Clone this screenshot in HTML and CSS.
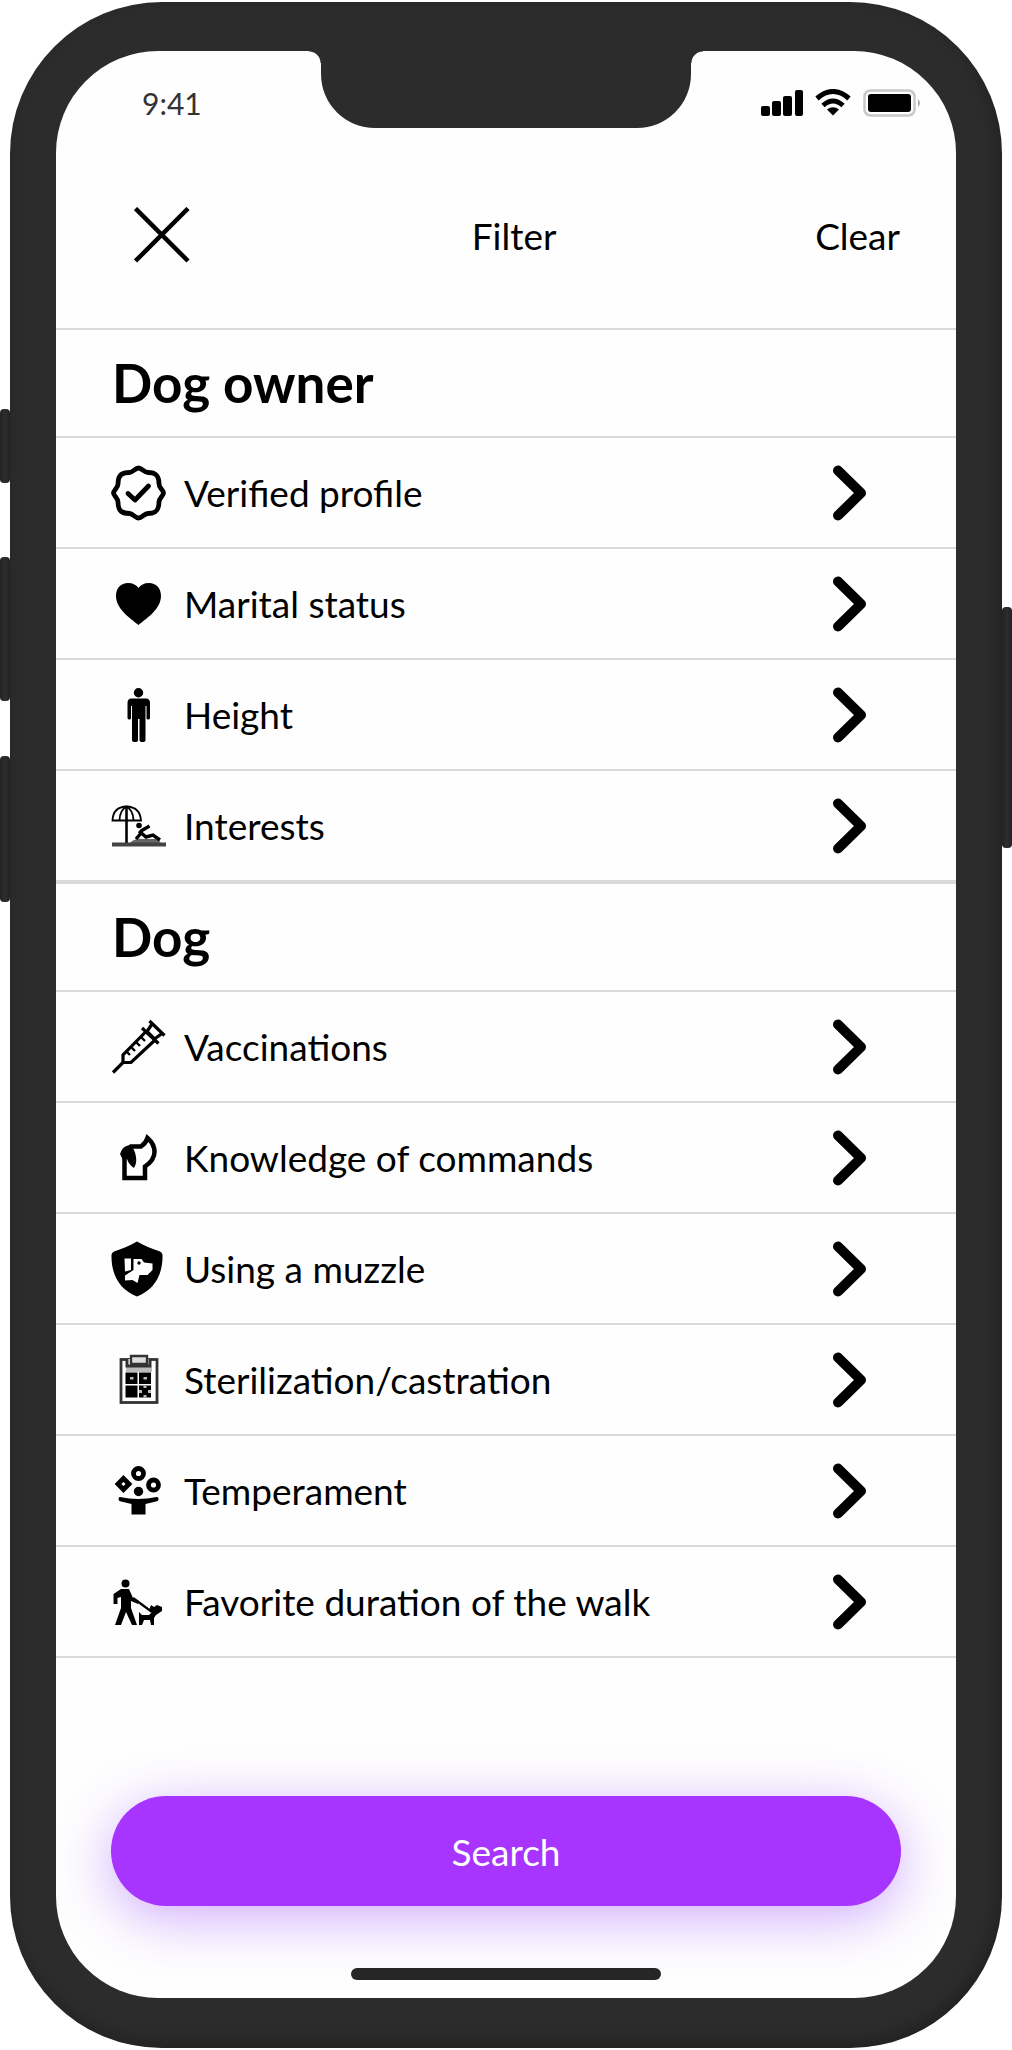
FILE: index.html
```
<!DOCTYPE html>
<html lang="en">
<head>
  <meta charset="UTF-8" />
  <meta name="viewport" content="width=device-width, initial-scale=1.0"/>
  <title>Filter</title>
  <link rel="stylesheet" href="styles.css">
</head>
<body>
<svg class="sprite" aria-hidden="true">
  <symbol id="chevron" viewBox="0 0 34 56">
    <path d="M5 5.500L28 28L5 50.500" fill="none" stroke="#000" stroke-width="10" stroke-linecap="round" stroke-linejoin="round"/>
  </symbol>
</svg>

<div class="phone">
  <span class="side-key mute"></span>
  <span class="side-key volume-up"></span>
  <span class="side-key volume-down"></span>
  <span class="side-key power"></span>

  <div class="screen">
    <div class="notch"></div>

    <div class="status-bar">
      <span class="time">9:41</span>
      <div class="status-icons">
        <svg width="44" height="28" viewBox="0 0 44 28">
          <rect x="0" y="17" width="9" height="10" rx="2"/>
          <rect x="11" y="12" width="9" height="15" rx="2"/>
          <rect x="22" y="7" width="9" height="20" rx="2"/>
          <rect x="34" y="1" width="8" height="26" rx="2"/>
        </svg>
        <svg width="38" height="28" viewBox="0 0 38 28">
          <path d="M2 9.500Q18 -4.500 34 9.500M8 16.500Q18 7.500 28 16.500" fill="none" stroke="#000" stroke-width="5"/>
          <path d="M12 20.500Q18 16 24 20.500L18 26.500Z"/>
        </svg>
        <svg width="59" height="28" viewBox="0 0 59 28">
          <rect x="1.500" y="1.500" width="50" height="25" rx="6" fill="none" stroke="#c8c8c8" stroke-width="2.500"/>
          <rect x="5" y="5" width="43" height="18" rx="3"/>
          <path d="M55 10q4 4 0 8z" fill="#aaa"/>
        </svg>
      </div>
    </div>

    <header class="header">
      <button class="close" type="button" aria-label="Close">
        <svg width="56" height="56" viewBox="0 0 56 56"><path d="M1.500 1.500L54 54M54 1.500L1.500 54" stroke="#000" stroke-width="4.500"/></svg>
      </button>
      <h1 class="title">Filter</h1>
      <button class="clear" type="button">Clear</button>
    </header>

    <section class="group">
      <h2>Dog owner</h2>
      <ul>
        <li><a class="row" href="#">
          <svg class="icon" viewBox="0 0 56 56">
            <g fill="none" stroke="#000" stroke-width="4.800" stroke-linejoin="round" stroke-linecap="round">
              <path d="M27.500 3C31 3 33 7.500 37 7.500C43 7.500 48 9 48 19C48 23 52.500 25 52.500 28C52.500 31 48 33 48 37C48 47 43 48.500 37 48.500C33 48.500 31 53 27.500 53C24 53 22 48.500 18.500 48.500C12 48.500 7 47 7 37C7 33 2.500 31 2.500 28C2.500 25 7 23 7 19C7 9 12 7.500 18.500 7.500C22 7.500 24 3 27.500 3Z"/>
              <path d="M17 28.500L24 35L37.500 21"/>
            </g>
          </svg>
          <span class="name">Verified profile</span>
          <svg class="chevron"><use href="#chevron"/></svg>
        </a></li>
        <li><a class="row" href="#">
          <svg class="icon" viewBox="0 0 56 56">
            <path d="M27.500 49C22 44 5 34 5 20C5 12 10 7 17 7C22 7 25.500 9 27.500 12C29.500 9 33 7 38 7C45 7 50 12 50 20C50 34 33 44 27.500 49Z"/>
          </svg>
          <span class="name">Marital status</span>
          <svg class="chevron"><use href="#chevron"/></svg>
        </a></li>
        <li><a class="row" href="#">
          <svg class="icon" viewBox="0 0 56 56">
            <circle cx="27.500" cy="5.800" r="4.700"/>
            <path d="M20.500 11.500H35Q39 11.500 39 16V31Q39 32.500 37 32.500Q35.500 32.500 35.500 31V19H34.500V53Q34.500 55 31.500 55Q28.500 55 28.500 53V32H27V53Q27 55 24 55Q21 55 21 53V19H20V31Q20 32.500 18.500 32.500Q16.500 32.500 16.500 31V16Q16.500 11.500 20.500 11.500Z"/>
          </svg>
          <span class="name">Height</span>
          <svg class="chevron"><use href="#chevron"/></svg>
        </a></li>
        <li><a class="row" href="#">
          <svg class="icon" viewBox="0 0 56 56">
            <g fill="none" stroke="#000" stroke-width="1.800">
              <path d="M1.500 22.500Q2 9 15.500 8.500Q29 9 30 22.500Z"/>
              <path d="M8.500 22Q9 12 15.500 8.500Q22 12 22.500 22"/>
              <path d="M15.500 8V45" stroke-width="2.600"/>
            </g>
            <path d="M19 45Q24 40 32 41L44 41Q47 41 50 45Z" fill="#666"/>
            <path d="M1 44.500H55V48.500H1Z" fill="#444"/>
            <circle cx="28" cy="27.500" r="2.800"/>
            <path d="M28 33L35 39L42 37L49 42M25 41L31 34M30 33L38.500 28" fill="none" stroke="#000" stroke-width="3.400"/>
          </svg>
          <span class="name">Interests</span>
          <svg class="chevron"><use href="#chevron"/></svg>
        </a></li>
      </ul>
    </section>

    <section class="group">
      <h2>Dog</h2>
      <ul>
        <li><a class="row" href="#">
          <svg class="icon" viewBox="0 0 56 56">
            <g fill="none" stroke="#000" stroke-width="3.200">
              <path d="M2 53.500L12 43.500"/>
              <path d="M34.500 13L12 36V43.500H20L43.500 21.500"/>
              <path d="M31 9L47.500 24.500M38.500 2L53.500 16.500M41 5L36 12.500L43.500 20L51 14.500"/>
              <path d="M30 18L34 22M25 23L29 27M20 28L24 32M16 33L19 36" stroke-width="2.400"/>
            </g>
          </svg>
          <span class="name">Vaccinations</span>
          <svg class="chevron"><use href="#chevron"/></svg>
        </a></li>
        <li><a class="row" href="#">
          <svg class="icon" viewBox="0 0 56 56">
            <path d="M13.500 48V25L20 16.500H30Q35 13 36.500 8Q43.500 14 43.500 22Q43.500 30 34 36.500V48Z" fill="none" stroke="#000" stroke-width="4.500"/>
            <path d="M9 24Q11 16 19 15Q24 19 25 27Q26 33 23 38Q18 35 16 29L12 30Z"/>
          </svg>
          <span class="name">Knowledge of commands</span>
          <svg class="chevron"><use href="#chevron"/></svg>
        </a></li>
        <li><a class="row" href="#">
          <svg class="icon" viewBox="0 0 56 56">
            <path d="M26 .5C33 5 42 8 49 10.500Q51.500 11.500 51.500 14C52 34 43 49 26 55.500C9 49 0 34 .5 14Q.5 11.500 3 10.500C10 8 19 5 26 .5Z"/>
            <path d="M13.500 17.500H20V29L14 30.500ZM22.500 18H30.500L33 21.500L41.500 22.500V29L36.500 34H28.500L26.500 42L21.500 39L14 39.500V34.500L22.500 29Z" fill="#fff"/>
            <circle cx="28" cy="22" r="1.700"/>
          </svg>
          <span class="name">Using a muzzle</span>
          <svg class="chevron"><use href="#chevron"/></svg>
        </a></li>
        <li><a class="row" href="#">
          <svg class="icon" viewBox="0 0 56 56">
            <rect x="10" y="7.500" width="36" height="43" fill="#fff" stroke="#333" stroke-width="2.800"/>
            <path d="M15 15H41V20H15Z" fill="#bbb"/>
            <path d="M16 7V14H39V7" fill="#fff" stroke="#333" stroke-width="3"/>
            <path d="M20 4H36V12H20Z" fill="#ddd" stroke="#333" stroke-width="2.400"/>
            <path d="M14.500 20.500H26.500V32H14.500ZM28 20.500H40V32H28ZM14.500 33.500H26.500V45.500H14.500ZM28 33.500H40V45.500H28Z"/>
            <path d="M19 25H22.500V27.500H19ZM32.500 25H36V27.500H32.500ZM28 38H31V41H28ZM37 38H40V41H37ZM32.500 33.500H35.500V36H32.500ZM32.500 43H35.500V45.500H32.500Z" fill="#bbb"/>
          </svg>
          <span class="name">Sterilization/castration</span>
          <svg class="chevron"><use href="#chevron"/></svg>
        </a></li>
        <li><a class="row" href="#">
          <svg class="icon" viewBox="0 0 56 56">
            <g fill="none" stroke="#000" stroke-width="4.800">
              <circle cx="27.500" cy="10.500" r="5"/>
              <circle cx="42.500" cy="22" r="5"/>
              <path d="M12.500 15.500L18 21L12.500 26.500L7 21Z"/>
            </g>
            <circle cx="27.500" cy="28.500" r="4.700"/>
            <path d="M9 34Q27 38 45.500 34Q48 34 47.500 36.500Q47 38.500 45 38.500L34.500 41V51.500H20.500V41L10 38.500Q7.500 38 7.500 36Q7.500 34 9 34Z"/>
          </svg>
          <span class="name">Temperament</span>
          <svg class="chevron"><use href="#chevron"/></svg>
        </a></li>
        <li><a class="row" href="#">
          <svg class="icon" viewBox="0 0 56 56">
            <circle cx="14.500" cy="9.500" r="4"/>
            <path d="M10 15H18L22 24L28 27L27 30L20 27V34L26 51H21L15 38L10 51H4L10 34V23L6.500 24V30H2.500V20Z"/>
            <path d="M22 24L41 38" stroke="#000" stroke-width="2.200"/>
            <path d="M40 31L43 33L46 31L51 33V37L45 41L43 44V51H40L39 46H33L31 51H28V38L31 41H38L41 38L38 36Z"/>
          </svg>
          <span class="name">Favorite duration of the walk</span>
          <svg class="chevron"><use href="#chevron"/></svg>
        </a></li>
      </ul>
    </section>

    <div class="actions">
      <button class="search" type="button">Search</button>
    </div>
    <div class="home-bar"></div>
  </div>
</div>
</body>
</html>
```
FILE: styles.css
```
* {
  box-sizing: border-box;
}

body {
  margin: 0;
  background-color: #fff;
  font-family: Lato, sans-serif;
  font-size: 37px;
  color: #000;
}

button {
  border: 0;
  padding: 0;
  background: none;
  font: inherit;
  color: inherit;
  cursor: pointer;
}

.sprite {
  display: none;
}

/* phone body */
.phone {
  position: relative;
  margin: 2px 10px;
  padding: 49px 46px 50px;
  background-color: #2c2c2c;
  border-radius: 152px;
  box-shadow: inset -4px -6px 16px rgba(0, 0, 0, 0.25);
}

.side-key {
  position: absolute;
  left: -10px;
  width: 10px;
  border-radius: 4px;
  background: linear-gradient(90deg, #222, #2d2d2d, #222);
}

.mute {
  top: 407px;
  height: 74px;
}

.volume-up {
  top: 555px;
  height: 144px;
}

.volume-down {
  top: 754px;
  height: 146px;
}

.power {
  top: 605px;
  left: auto;
  right: -10px;
  height: 241px;
}

.screen {
  position: relative;
  display: flex;
  flex-direction: column;
  background-color: #fefefe;
  border-radius: 102px;
}

.notch {
  position: absolute;
  top: -1px;
  left: 50%;
  width: 370px;
  height: 78px;
  transform: translateX(-50%);
  background-color: #2c2c2c;
  border-radius: 0 0 54px 54px;
}

.notch::before,
.notch::after {
  content: "";
  position: absolute;
  top: 1px;
  width: 12px;
  height: 12px;
}

.notch::before {
  right: 100%;
  background: radial-gradient(circle at 0 100%, transparent 11px, #2c2c2c 12px);
}

.notch::after {
  left: 100%;
  background: radial-gradient(circle at 100% 100%, transparent 11px, #2c2c2c 12px);
}

.status-bar {
  display: flex;
  justify-content: space-between;
  align-items: center;
  padding: 32px 34px 0 86px;
}

.time {
  font-size: 30px;
  line-height: 40px;
  color: #333;
}

.status-icons {
  display: flex;
  gap: 10px;
}

.header {
  display: flex;
  justify-content: space-between;
  align-items: center;
  padding: 61px 56px 42px 55px;
}

.close {
  display: flex;
  align-items: center;
  justify-content: center;
  width: 102px;
  height: 102px;
}

.title {
  margin: 0;
  font-size: 37px;
  font-weight: 400;
}

.group {
  border-top: 2px solid #dadada;
}

.group h2 {
  margin: 0;
  padding: 0 56px;
  font-size: 53px;
  line-height: 106px;
  border-bottom: 2px solid #dadada;
}

.group ul {
  margin: 0;
  padding: 0;
  list-style: none;
}

.row {
  display: flex;
  align-items: center;
  gap: 17px;
  height: 111px;
  padding: 0 89px 0 55px;
  border-bottom: 2px solid #dadada;
  color: inherit;
  text-decoration: none;
}

.icon {
  flex: none;
  width: 56px;
  height: 56px;
}

.name {
  flex: 1;
}

.chevron {
  flex: none;
  width: 34px;
  height: 56px;
}

.actions {
  padding: 138px 55px 62px;
}

.search {
  display: block;
  width: 100%;
  height: 110px;
  border-radius: 55px;
  background-color: #a734ff;
  color: #fff;
  box-shadow: 0 12px 56px rgba(140, 50, 255, 0.4);
}

.home-bar {
  width: 310px;
  height: 12px;
  margin: 0 auto 18px;
  border-radius: 6px;
  background-color: #262626;
}
```
